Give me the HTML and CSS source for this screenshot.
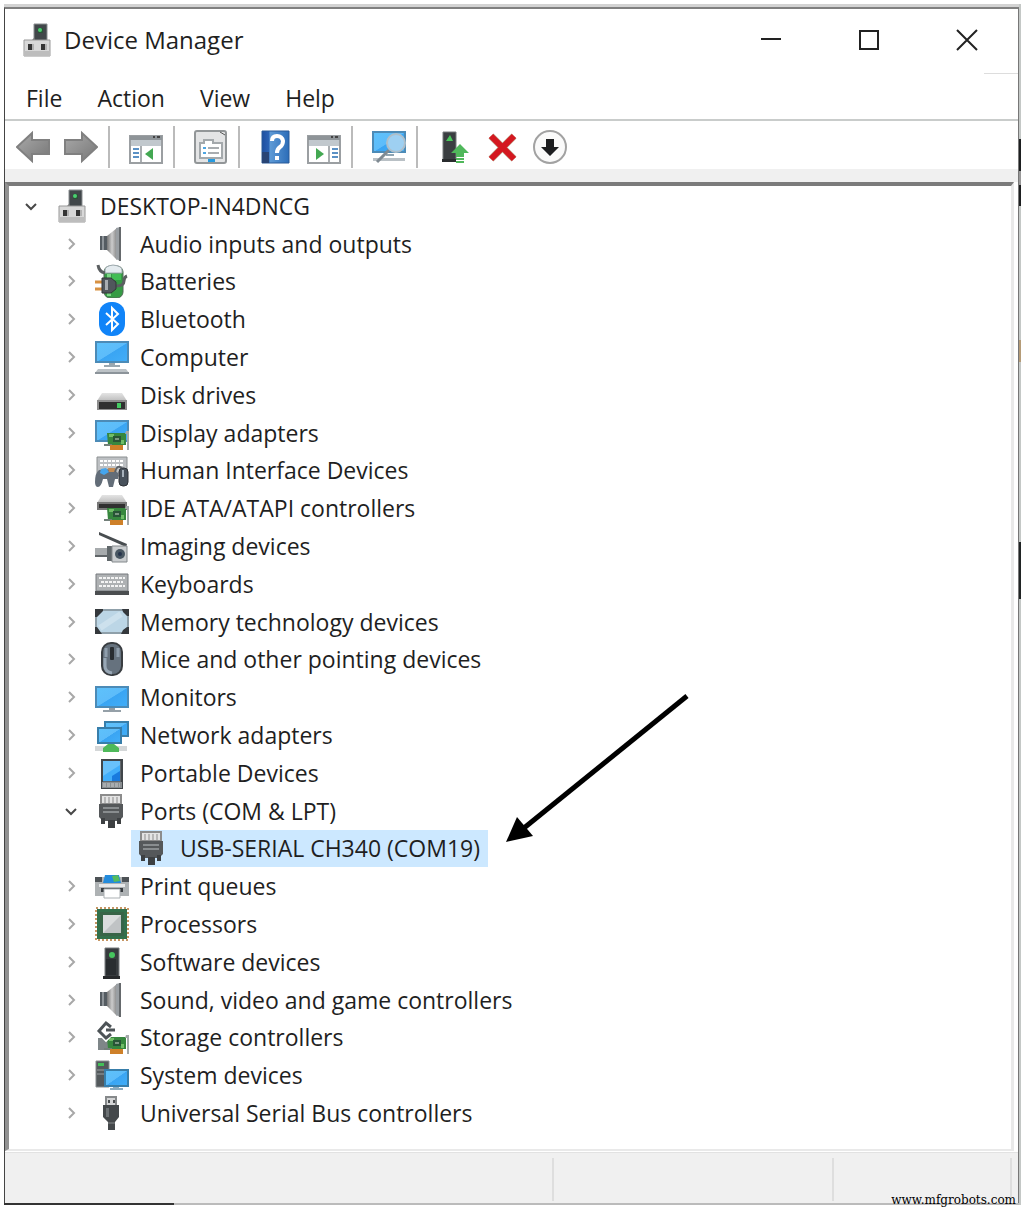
FILE: index.html
```html
<!DOCTYPE html>
<html lang="en">
<head>
  <meta charset="utf-8">
  <title>Device Manager</title>
  <link rel="stylesheet" href="styles.css">
</head>
<body>
  <!-- Icon sprites, all on a 34x34 grid -->
  <svg class="sprites" aria-hidden="true">
    <defs>
      <linearGradient id="blue" x1="0" y1="0" x2="1" y2="1">
        <stop offset="0" stop-color="#5ec2fb"/><stop offset=".5" stop-color="#5dbcfa"/><stop offset=".52" stop-color="#3aa5f3"/><stop offset="1" stop-color="#42aef8"/>
      </linearGradient>
      <linearGradient id="metal" x1="0" y1="0" x2="1" y2="0">
        <stop offset="0" stop-color="#777"/><stop offset=".5" stop-color="#ccc"/><stop offset="1" stop-color="#858585"/>
      </linearGradient>
      <linearGradient id="arrow-fill" x1="0" y1="0" x2="1" y2="1">
        <stop offset="0" stop-color="#aaa"/><stop offset="1" stop-color="#777"/>
      </linearGradient>
      <linearGradient id="lid" x1="0" y1="0" x2="0" y2="1">
        <stop offset="0" stop-color="#e4e4e4"/><stop offset="1" stop-color="#bcbcbc"/>
      </linearGradient>
      <linearGradient id="help-fill" x1="0" y1="0" x2="1" y2="0">
        <stop offset="0" stop-color="#1e4fa0"/><stop offset=".25" stop-color="#2a62b4"/><stop offset=".3" stop-color="#5d9ad6"/><stop offset="1" stop-color="#2c6db8"/>
      </linearGradient>
    </defs>

    <symbol id="open" viewBox="0 0 12 12"><path d="M1 4l5 5 5-5" fill="none" stroke="#484848" stroke-width="2"/></symbol>
    <symbol id="closed" viewBox="0 0 12 12"><path d="M4 1l5 5-5 5" fill="none" stroke="#a8a8a8" stroke-width="2"/></symbol>

    <symbol id="pc" viewBox="0 0 34 34">
      <path d="M14 1h13v17H14z" fill="#41474a" stroke="#8b8f91"/><path d="M14 15l-3 3h4z" fill="#777"/>
      <path d="M18 5h5v5h-5z" fill="#2b5137"/><circle cx="20" cy="7" r="2" fill="#4ad070"/>
      <path d="M4 17h26v16H4z" fill="#d8d8d8" stroke="#999"/><path d="M4 28h26v5H4z" fill="#bdbdbd"/>
      <path d="M8 21h4v6H8zM21 21h4v6h-4z" fill="#353535"/><path d="M12 21h2v6h-2zM25 21h2v6h-2z" fill="#b2b2b2"/>
    </symbol>
    <symbol id="speaker" viewBox="0 0 34 34">
      <path d="M5 9h7v14H5z" fill="#555c62"/><path d="M7 9h2v14H7z" fill="#8e9499"/>
      <path d="M12 9L22 1v32l-10-10z" fill="url(#metal)"/><path d="M21 1l4-1v34l-4-2z" fill="#9a9fa3"/><path d="M24 0h2v34h-2z" fill="#65696c"/>
    </symbol>
    <symbol id="battery" viewBox="0 0 34 34">
      <rect x="9" y="2" width="19" height="32" rx="6" fill="#369b45" stroke="#516756"/>
      <path d="M10 9V6q0-4 8-5 9 1 9 5v3z" fill="#e4ebef" stroke="#9eaaaf"/>
      <path d="M12 10h4v22h-4z" fill="#7bd685"/><path d="M17 10h9v6h-9z" fill="#42bd54"/>
      <path d="M3 1q1 7 7 8M21 22q8 0 8-5 0-4 3-5" fill="none" stroke="#5b5f61" stroke-width="3"/>
      <path d="M0 18h8M0 25h8" stroke="#d89142" stroke-width="3"/>
      <path d="M7 14h9l5 4v7l-5 4H7z" fill="#50575c" stroke="#323638"/><path d="M10 16h3v10h-3z" fill="#a8adb0"/>
    </symbol>
    <symbol id="bluetooth" viewBox="0 0 34 34">
      <rect x="4" width="26" height="34" rx="12" fill="#1184f8"/>
      <path d="M11 11l12 11-6 6V6l6 6-12 11" fill="none" stroke="#fff" stroke-width="2"/>
    </symbol>
    <symbol id="computer" viewBox="0 0 34 34">
      <path d="M1 2h32v20H1z" fill="url(#blue)" stroke="#4c8bb7" stroke-width="2"/>
      <path d="M14 23h6v2h5v2H9v-2h5z" fill="#9ba8b0"/><path d="M3 29h28l3 4H0z" fill="#bcc2c6"/><path d="M0 32h34v2H0z" fill="#8c949a"/>
    </symbol>
    <symbol id="disk" viewBox="0 0 34 34">
      <path d="M7 15h20l5 8H2z" fill="url(#lid)"/><path d="M2 22h30v10H2z" fill="#8d8d8d"/><path d="M4 24h26v7H4z" fill="#303030"/><path d="M22 25h4v5h-4z" fill="#43cb61"/>
    </symbol>
    <symbol id="card" viewBox="0 0 34 34">
      <path d="M12 17h19v12H13z" fill="#37873e"/><path d="M9 28h8v2H9z" fill="#73807a"/><path d="M14 18h5v3h-5zM26 24h3v4h-3z" fill="#71bd67"/>
      <path d="M18 20h8v6h-8z" fill="#285536"/><path d="M20 22h4v2h-4z" fill="#7b9781"/><path d="M15 29h13v5H15z" fill="#ce8029"/><path d="M31 15h3v19h-2V18h-2z" fill="#a4a9aa"/>
    </symbol>
    <symbol id="display" viewBox="0 0 34 34">
      <path d="M1 5h32v20H1z" fill="url(#blue)" stroke="#4c8bb7" stroke-width="2"/><use href="#card"/>
    </symbol>
    <symbol id="hid" viewBox="0 0 34 34">
      <path d="M2 4h30v19H2z" fill="#bdc0c3" stroke="#8c9092"/><path d="M5 8h23M5 12h23" stroke="#fff" stroke-width="2" stroke-dasharray="3 1"/>
      <path d="M4 17q-4 3-4 12 0 5 3 5 3 0 5-8h4l2 8h4l2-8h3v-6l-5-4z" fill="#636d78"/><path d="M6 16l5-1 3 4-5 3-4-2z" fill="#45a5ed"/><path d="M13 15h7v4h-6z" fill="#c28b54"/>
      <rect x="24" y="15" width="9" height="18" rx="4" fill="#48515b" stroke="#2d3136"/><path d="M28 17v7" stroke="#a7b1bb" stroke-width="2"/><path d="M20 19q2-8 7-4" fill="none" stroke="#5c6166" stroke-width="2"/>
    </symbol>
    <symbol id="ide" viewBox="0 0 34 34">
      <path d="M7 4h20l5 8H2z" fill="url(#lid)"/><path d="M2 11h30v8H2z" fill="#777"/><path d="M4 13h26v4H4z" fill="#303030"/><use href="#card"/>
    </symbol>
    <symbol id="imaging" viewBox="0 0 34 34">
      <path d="M4 3l28 12-1 3L4 6z" fill="#484d50"/><path d="M0 19h14v9H0z" fill="#a7abad"/><path d="M0 26h14v2H0z" fill="#606568"/>
      <path d="M12 17h5v15h-5z" fill="#60676a"/><path d="M17 17h15v16H17z" fill="#cacdcf" stroke="#84898c"/><circle cx="25" cy="25" r="5" fill="#495762"/><circle cx="25" cy="25" r="2" fill="#26344c"/>
    </symbol>
    <symbol id="keyboard" viewBox="0 0 34 34">
      <path d="M1 7h32v17H1z" fill="#aeb1b3" stroke="#777b7e"/><path d="M4 11h26M6 15h22M4 19h26" stroke="#f4f4f4" stroke-width="2" stroke-dasharray="3 1"/><path d="M0 24h34v4H0z" fill="#4b4e50"/>
    </symbol>
    <symbol id="memory" viewBox="0 0 34 34">
      <path d="M1 5h32v23H1z" fill="#bcd6e6" stroke="#8fa0aa" stroke-width="2"/><path d="M5 23L26 9" stroke="#cde1ed" stroke-width="6"/>
      <path d="M0 4h8v2L2 12H0zM34 4h-7l1 3 4 4h2zM0 29h7l-5-7H0zM34 29h-8l2-4 4-3h2z" fill="#34383c"/>
    </symbol>
    <symbol id="mouse" viewBox="0 0 34 34">
      <rect x="7" y="1" width="20" height="32" rx="9" fill="#66727e" stroke="#393d41" stroke-width="2"/><path d="M10 16v8q0 6 7 7" stroke="#98a7b5" stroke-width="3" fill="none"/><path d="M11 6v9M23 6v9" stroke="#8f9eac" stroke-width="3"/><rect x="15" y="5" width="4" height="13" rx="1" fill="#292d31"/>
    </symbol>
    <symbol id="monitor" viewBox="0 0 34 34">
      <path d="M1 7h32v20H1z" fill="url(#blue)" stroke="#4c8bb7" stroke-width="2"/><path d="M14 28h6v2h6v2H8v-2h6z" fill="#95a0a8"/>
    </symbol>
    <symbol id="network" viewBox="0 0 34 34">
      <path d="M10 4h23v14H10z" fill="url(#blue)" stroke="#387eaa" stroke-width="2"/><path d="M3 10h23v15H3z" fill="url(#blue)" stroke="#387eaa" stroke-width="2"/>
      <path d="M0 28h32v5H0z" fill="#d4d7d8"/><path d="M13 26h6l5 4v4H8v-4z" fill="#4eb95a"/>
    </symbol>
    <symbol id="portable" viewBox="0 0 34 34">
      <path d="M7 4h20v28H7z" fill="#62686d" stroke="#41464a" stroke-width="2"/><path d="M8 5h17v20H8z" fill="#42aefa"/><path d="M8 20L25 9V5H8z" fill="#69c1fa"/><path d="M17 25v-5l8-5v10z" fill="#197ade"/><path d="M7 26h20v6H7z" fill="#898e91"/><path d="M8 28h17M8 30h17" stroke="#c7cacd" stroke-dasharray="3 1"/>
    </symbol>
    <symbol id="port" viewBox="0 0 34 34">
      <path d="M6 1h20v9H6z" fill="#e3e3e3" stroke="#8c8c8c" stroke-width="2"/><path d="M10 3v6M14 3v6M18 3v6M22 3v6" stroke="#8b8b8b"/>
      <path d="M4 10h24v13l-4 4H8l-4-4z" fill="#55585a"/><path d="M8 14h16M8 18h16" stroke="#898d8f" stroke-width="2"/><path d="M6 24h4v6H6zM22 24h4v6h-4zM13 26h7v8h-7z" fill="#3d4042"/>
    </symbol>
    <symbol id="printer" viewBox="0 0 34 34">
      <path d="M3 8h28l3 4v15H0V12z" fill="#aeb2b4"/><path d="M0 8h7v5H0zM27 8h7v5h-7z" fill="#4d5256"/><path d="M10 6h14l2 8H8z" fill="#238bdc"/><path d="M17 7l6-1 2 6-6 1z" fill="#55bc5d"/>
      <path d="M4 15h26v3H4z" fill="#e8e9ea"/><path d="M6 19h22v4H6z" fill="#373c40"/><path d="M9 20h16v9H9z" fill="#fff" stroke="#abb0b3"/>
    </symbol>
    <symbol id="processor" viewBox="0 0 34 34">
      <path d="M1 1h32v32H1z" fill="none" stroke="#c69664" stroke-width="2" stroke-dasharray="2 2"/><path d="M2 2h30v30H2z" fill="#32704b"/><path d="M5 5h24v24H5z" fill="#386447"/><path d="M8 8h18v18H8z" fill="#dadcdd"/><path d="M8 26L26 8v18z" fill="#c0c3c5"/>
    </symbol>
    <symbol id="software" viewBox="0 0 34 34">
      <path d="M10 3h14v29H10z" fill="#373b3e" stroke="#777b7d"/><path d="M11 14h10v16H11z" fill="#292d30"/><circle cx="17" cy="10" r="3" fill="#46c45e"/><path d="M8 31h17v3H8z" fill="#27292b"/>
    </symbol>
    <symbol id="storage" viewBox="0 0 34 34">
      <path d="M3 18h16v12H3z" fill="#7e8688"/><use href="#card"/><path d="M4 11l7-8 5 5M4 11l7 7 4-4M11 10h9" fill="none" stroke="#fff" stroke-width="6"/><path d="M16 7l-5-4-7 8 7 7 5-4M11 10h9" fill="none" stroke="#4d5357" stroke-width="3"/>
    </symbol>
    <symbol id="system" viewBox="0 0 34 34">
      <path d="M1 3h13v26H1z" fill="#53595c" stroke="#888d90"/><path d="M3 5h6v3H3z" fill="#43bf58"/><path d="M2 12h9M2 16h9" stroke="#9ba0a2"/><path d="M10 12h23v16H10z" fill="url(#blue)" stroke="#387eaa" stroke-width="2"/><path d="M18 29h6v1h4v2H15v-2h3z" fill="#8dacbf"/>
    </symbol>
    <symbol id="usb" viewBox="0 0 34 34">
      <path d="M11 1h10v10H11z" fill="#d4d5d6" stroke="#86898b" stroke-width="2"/><path d="M13 4h2v3h-2zM18 4h2v3h-2z" fill="#4a4d4f"/><path d="M8 9h16v12l-4 5v8h-7v-8l-5-5z" fill="#44484b"/><path d="M11 12h3v9h-3z" fill="#6c7174"/><path d="M13 27h7" stroke="#85898b"/>
    </symbol>

    <symbol id="back" viewBox="0 0 34 34"><path d="M1 17L16 3v7h17v14H16v7z" fill="url(#arrow-fill)" stroke="#808080" stroke-width="2"/></symbol>
    <symbol id="forward" viewBox="0 0 34 34"><path d="M33 17L18 3v7H1v14h17v7z" fill="url(#arrow-fill)" stroke="#808080" stroke-width="2"/></symbol>
    <symbol id="tree-pane" viewBox="0 0 34 34">
      <path d="M1 6h32v27H1z" fill="#fff" stroke="#9b9fa2" stroke-width="2"/><path d="M1 6h32v4H1z" fill="#8e9498"/><path d="M2 10h30v6H2z" fill="#c1c8cd"/><path d="M24 7h2M28 7h3" stroke="#444" stroke-width="2"/>
      <path d="M12 16v16" stroke="#a9adb0" stroke-width="2"/><path d="M4 19h6M4 23h6M4 27h6" stroke="#5b91c5" stroke-width="2"/><path d="M24 18v12l-8-6z" fill="#43a852"/>
    </symbol>
    <symbol id="action-pane" viewBox="0 0 34 34">
      <path d="M1 6h32v27H1z" fill="#fff" stroke="#9b9fa2" stroke-width="2"/><path d="M1 6h32v4H1z" fill="#8e9498"/><path d="M2 10h30v6H2z" fill="#c1c8cd"/><path d="M24 7h2M28 7h3" stroke="#444" stroke-width="2"/>
      <path d="M22 16v16" stroke="#a9adb0" stroke-width="2"/><path d="M25 19h6M25 23h6M25 27h6" stroke="#5b91c5" stroke-width="2"/><path d="M9 18v12l8-6z" fill="#43a852"/>
    </symbol>
    <symbol id="properties" viewBox="0 0 34 34">
      <rect x="1" y="1" width="31" height="32" rx="2" fill="#e3e4e5" stroke="#929698" stroke-width="2"/><path d="M26 2l5 3" stroke="#555"/>
      <path d="M6 28V13h4v-3h9v3h9v15z" fill="#fff" stroke="#a4a9ac" stroke-width="2"/><path d="M9 18h3M9 23h3" stroke="#4ea6e2" stroke-width="2"/><path d="M14 18h11M14 23h11" stroke="#a9adb0" stroke-width="2"/><path d="M14 29h7v3h-7z" fill="#269adf"/>
    </symbol>
    <symbol id="help" viewBox="0 0 34 34">
      <path d="M3 1h27v32H3z" fill="url(#help-fill)" stroke="#285a99"/><path d="M3 22h7v11H3z" fill="#284475"/>
      <path d="M13 11q0-5 5-5t6 5q0 4-3 6t-3 6M18 26v4" fill="none" stroke="#fff" stroke-width="4"/>
    </symbol>
    <symbol id="scan" viewBox="0 0 34 34">
      <path d="M1 2h32v20H1z" fill="url(#blue)" stroke="#4c8bb7" stroke-width="2"/><path d="M1 28h32v3H1z" fill="#b9c0c5"/><path d="M14 24h8v2h-8z" fill="#8fa4b1"/>
      <path d="M17 20L5 32" stroke="#7f8a92" stroke-width="3"/><circle cx="24" cy="13" r="9" fill="#9ed0f2" stroke="#aebfca" stroke-width="2"/>
    </symbol>
    <symbol id="update" viewBox="0 0 34 34">
      <path d="M6 2h13v28H6z" fill="#3a3e41" stroke="#777b7d"/><path d="M9 11l4-6 3 6z" fill="#49c85b"/><path d="M5 29h14v3H5z" fill="#292c2e"/>
      <path d="M23 14l9 9h-5v4h-8v-4h-5z" fill="#50b85b"/><path d="M19 29h8M19 32h8" stroke="#50b85b" stroke-width="2"/>
    </symbol>
    <symbol id="remove" viewBox="0 0 34 34"><path d="M6 6l23 23M29 6L6 29" stroke="#b6a087" stroke-width="7"/><path d="M6 6l23 23M29 6L6 29" stroke="#d41820" stroke-width="6"/></symbol>
    <symbol id="disable" viewBox="0 0 34 34"><circle cx="17" cy="17" r="16" fill="#fafafa" stroke="#a2a2a2" stroke-width="2"/><path d="M13 9h8v8h5l-9 9-9-9h5z" fill="#1d1e20"/></symbol>
  </svg>

  <main class="window">
    <header class="title-bar">
      <svg class="icon"><use href="#pc"/></svg>
      <h1>Device Manager</h1>
      <div class="window-controls">
        <button aria-label="Minimize"><svg viewBox="0 0 20 20"><path d="M0 9h20"/></svg></button>
        <button aria-label="Maximize"><svg viewBox="0 0 20 20"><path d="M1 1h18v18H1z"/></svg></button>
        <button aria-label="Close"><svg viewBox="0 0 20 20"><path d="M0 0l20 20M20 0L0 20"/></svg></button>
      </div>
    </header>

    <nav class="menu-bar">
      <button>File</button>
      <button>Action</button>
      <button>View</button>
      <button>Help</button>
    </nav>

    <div class="toolbar" role="toolbar">
      <button aria-label="Back"><svg class="icon"><use href="#back"/></svg></button>
      <button aria-label="Forward"><svg class="icon"><use href="#forward"/></svg></button>
      <span class="separator"></span>
      <button aria-label="Show console tree"><svg class="icon"><use href="#tree-pane"/></svg></button>
      <span class="separator"></span>
      <button aria-label="Properties"><svg class="icon"><use href="#properties"/></svg></button>
      <span class="separator"></span>
      <button aria-label="Help topics"><svg class="icon"><use href="#help"/></svg></button>
      <button aria-label="Show action pane"><svg class="icon"><use href="#action-pane"/></svg></button>
      <span class="separator"></span>
      <button aria-label="Scan for hardware changes"><svg class="icon"><use href="#scan"/></svg></button>
      <span class="separator"></span>
      <button aria-label="Update driver"><svg class="icon"><use href="#update"/></svg></button>
      <button aria-label="Uninstall device"><svg class="icon"><use href="#remove"/></svg></button>
      <button aria-label="Disable device"><svg class="icon"><use href="#disable"/></svg></button>
    </div>

    <ul class="tree" role="tree">
      <li class="root" role="treeitem" aria-level="1" aria-expanded="true"><button class="toggle" aria-label="Collapse"><svg><use href="#open"/></svg></button><span class="node"><svg class="icon"><use href="#pc"/></svg>DESKTOP-IN4DNCG</span></li>
      <li role="treeitem" aria-level="2"><button class="toggle" aria-label="Expand"><svg><use href="#closed"/></svg></button><span class="node"><svg class="icon"><use href="#speaker"/></svg>Audio inputs and outputs</span></li>
      <li role="treeitem" aria-level="2"><button class="toggle" aria-label="Expand"><svg><use href="#closed"/></svg></button><span class="node"><svg class="icon"><use href="#battery"/></svg>Batteries</span></li>
      <li role="treeitem" aria-level="2"><button class="toggle" aria-label="Expand"><svg><use href="#closed"/></svg></button><span class="node"><svg class="icon"><use href="#bluetooth"/></svg>Bluetooth</span></li>
      <li role="treeitem" aria-level="2"><button class="toggle" aria-label="Expand"><svg><use href="#closed"/></svg></button><span class="node"><svg class="icon"><use href="#computer"/></svg>Computer</span></li>
      <li role="treeitem" aria-level="2"><button class="toggle" aria-label="Expand"><svg><use href="#closed"/></svg></button><span class="node"><svg class="icon"><use href="#disk"/></svg>Disk drives</span></li>
      <li role="treeitem" aria-level="2"><button class="toggle" aria-label="Expand"><svg><use href="#closed"/></svg></button><span class="node"><svg class="icon"><use href="#display"/></svg>Display adapters</span></li>
      <li role="treeitem" aria-level="2"><button class="toggle" aria-label="Expand"><svg><use href="#closed"/></svg></button><span class="node"><svg class="icon"><use href="#hid"/></svg>Human Interface Devices</span></li>
      <li role="treeitem" aria-level="2"><button class="toggle" aria-label="Expand"><svg><use href="#closed"/></svg></button><span class="node"><svg class="icon"><use href="#ide"/></svg>IDE ATA/ATAPI controllers</span></li>
      <li role="treeitem" aria-level="2"><button class="toggle" aria-label="Expand"><svg><use href="#closed"/></svg></button><span class="node"><svg class="icon"><use href="#imaging"/></svg>Imaging devices</span></li>
      <li role="treeitem" aria-level="2"><button class="toggle" aria-label="Expand"><svg><use href="#closed"/></svg></button><span class="node"><svg class="icon"><use href="#keyboard"/></svg>Keyboards</span></li>
      <li role="treeitem" aria-level="2"><button class="toggle" aria-label="Expand"><svg><use href="#closed"/></svg></button><span class="node"><svg class="icon"><use href="#memory"/></svg>Memory technology devices</span></li>
      <li role="treeitem" aria-level="2"><button class="toggle" aria-label="Expand"><svg><use href="#closed"/></svg></button><span class="node"><svg class="icon"><use href="#mouse"/></svg>Mice and other pointing devices</span></li>
      <li role="treeitem" aria-level="2"><button class="toggle" aria-label="Expand"><svg><use href="#closed"/></svg></button><span class="node"><svg class="icon"><use href="#monitor"/></svg>Monitors</span></li>
      <li role="treeitem" aria-level="2"><button class="toggle" aria-label="Expand"><svg><use href="#closed"/></svg></button><span class="node"><svg class="icon"><use href="#network"/></svg>Network adapters</span></li>
      <li role="treeitem" aria-level="2"><button class="toggle" aria-label="Expand"><svg><use href="#closed"/></svg></button><span class="node"><svg class="icon"><use href="#portable"/></svg>Portable Devices</span></li>
      <li role="treeitem" aria-level="2" aria-expanded="true"><button class="toggle" aria-label="Collapse"><svg><use href="#open"/></svg></button><span class="node"><svg class="icon"><use href="#port"/></svg>Ports (COM &amp; LPT)</span></li>
      <li class="leaf" role="treeitem" aria-level="3" aria-selected="true"><span class="node selected"><svg class="icon"><use href="#port"/></svg>USB-SERIAL CH340 (COM19)
        <svg class="pointer" viewBox="0 0 184 150" aria-hidden="true"><path d="M181 2L18 134" stroke="#000" stroke-width="5"/><path d="M0 148l11-25 16 19z"/></svg></span></li>
      <li role="treeitem" aria-level="2"><button class="toggle" aria-label="Expand"><svg><use href="#closed"/></svg></button><span class="node"><svg class="icon"><use href="#printer"/></svg>Print queues</span></li>
      <li role="treeitem" aria-level="2"><button class="toggle" aria-label="Expand"><svg><use href="#closed"/></svg></button><span class="node"><svg class="icon"><use href="#processor"/></svg>Processors</span></li>
      <li role="treeitem" aria-level="2"><button class="toggle" aria-label="Expand"><svg><use href="#closed"/></svg></button><span class="node"><svg class="icon"><use href="#software"/></svg>Software devices</span></li>
      <li role="treeitem" aria-level="2"><button class="toggle" aria-label="Expand"><svg><use href="#closed"/></svg></button><span class="node"><svg class="icon"><use href="#speaker"/></svg>Sound, video and game controllers</span></li>
      <li role="treeitem" aria-level="2"><button class="toggle" aria-label="Expand"><svg><use href="#closed"/></svg></button><span class="node"><svg class="icon"><use href="#storage"/></svg>Storage controllers</span></li>
      <li role="treeitem" aria-level="2"><button class="toggle" aria-label="Expand"><svg><use href="#closed"/></svg></button><span class="node"><svg class="icon"><use href="#system"/></svg>System devices</span></li>
      <li role="treeitem" aria-level="2"><button class="toggle" aria-label="Expand"><svg><use href="#closed"/></svg></button><span class="node"><svg class="icon"><use href="#usb"/></svg>Universal Serial Bus controllers</span></li>
    </ul>

    <footer class="status-bar">
      <span></span>
      <span></span>
      <span></span>
    </footer>
  </main>
  <div class="watermark">www.mfgrobots.com</div>
</body>
</html>
```
FILE: styles.css
```css
* {
  box-sizing: border-box;
}
/* the gradients are the slivers of desktop seen right of and below the window */
body {
  margin: 0;
  min-height: 100vh;
  display: flex;
  padding: 7px 7px 7px 4px;
  background:
    linear-gradient(90deg, #333 170px, #bbb 170px) 4px calc(100% - 5px) / calc(100% - 11px) 2px no-repeat,
    linear-gradient(#c4c8c6 135px, #1d1f20 135px, #1d1f20 167px, #999 167px, #999 181px, #1d1f20 181px, #1d1f20 202px, #c4c8c6 202px, #c4c8c6 336px, #b59c78 336px, #b59c78 358px, #c4c8c6 358px, #c4c8c6 538px, #202424 538px, #202424 595px, #c4c8c6 595px) calc(100% - 5px) 4px / 2px calc(100% - 9px) no-repeat,
    #fff;
  color: #1f1f1f;
  font-family: "Open Sans", "Noto Sans", sans-serif;
  font-size: 23px;
  line-height: 32px;
}
button {
  padding: 0;
  border: none;
  background: none;
  color: inherit;
  font: inherit;
}
.sprites {
  position: absolute;
  width: 0;
  height: 0;
}
.icon {
  width: 34px;
  height: 34px;
  flex: none;
}

.window {
  flex: 1;
  display: flex;
  flex-direction: column;
  background: #fff;
  border: 1px solid #444;
  border-top: 2px solid #808080;
  border-right-color: #777;
  border-bottom: none;
  box-shadow: 0 -3px 0 #d3d3d3;
}

.title-bar {
  display: flex;
  align-items: center;
  height: 62px;
  padding: 0 2px 0 15px;
}
.title-bar h1 {
  margin: 0 0 0 10px;
  font-size: 24px;
  font-weight: 400;
}
.window-controls {
  display: flex;
  margin-left: auto;
}
.window-controls button {
  display: flex;
  align-items: center;
  justify-content: center;
  width: 98px;
  height: 62px;
}
.window-controls svg {
  width: 20px;
  height: 20px;
  overflow: visible;
  fill: none;
  stroke: #222;
  stroke-width: 2;
}

.menu-bar {
  display: flex;
  gap: 35px;
  height: 50px;
  padding: 6px 21px 0;
  background: linear-gradient(#ddd, #ddd) right 2px / 34px 1px no-repeat;
  border-bottom: 2px solid #c9cccb;
}
.toolbar {
  display: flex;
  align-items: center;
  height: 61px;
  padding: 4px 0 0 4px;
  border-bottom: 13px solid #f0f0f0;
}
.toolbar button {
  display: flex;
  justify-content: center;
  width: 48px;
}
.separator {
  width: 2px;
  height: 42px;
  margin: 0 12px 0 3px;
  background: #bbb;
}

.tree {
  flex: 1;
  display: grid;
  grid-auto-rows: 1fr;
  margin: 0 4px 0 0;
  padding: 1px 0 17px 2px;
  list-style: none;
  border-top: 4px solid #7b7b7b;
  border-left: 4px solid #929292;
  border-right: 3px solid #e9e9e9;
  border-bottom: 2px solid #e9e9e9;
}
.tree li {
  display: flex;
  padding-left: 40px;
}
.tree .root {
  padding-left: 0;
}
.tree .leaf {
  padding-left: 120px;
}
.toggle {
  display: flex;
  align-items: center;
  justify-content: center;
  width: 40px;
}
.toggle svg {
  width: 12px;
  height: 12px;
}
.node {
  position: relative;
  display: flex;
  align-items: center;
  gap: 11px;
  padding: 0 8px 0 4px;
  white-space: nowrap;
}
.selected {
  background: #cce8ff;
}
.pointer {
  position: absolute;
  left: calc(100% + 18px);
  bottom: 23px;
  width: 184px;
  height: 150px;
}

.status-bar {
  display: flex;
  height: 51px;
  margin-top: 1px;
  padding: 5px 6px 2px 0;
  background: #f0f0f0;
  border-top: 1px solid #e2e2e2;
}
.status-bar span {
  flex: 280;
  border-right: 2px solid #dedede;
}
.status-bar span:first-child {
  flex: 550;
}
.status-bar span:last-child {
  flex: 177;
}
.watermark {
  position: absolute;
  right: 10px;
  bottom: 2px;
  color: #000;
  font-family: "DejaVu Serif", serif;
  font-size: 12px;
  line-height: 16px;
}
```
